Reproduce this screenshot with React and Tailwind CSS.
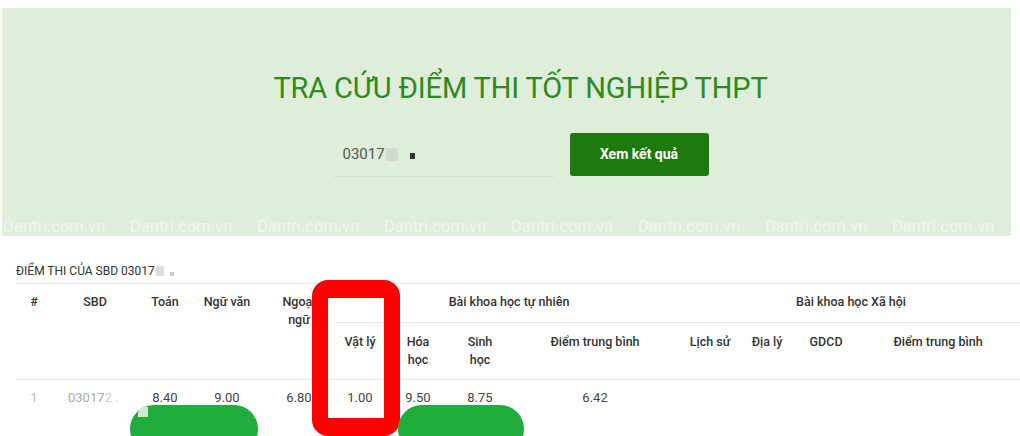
import React from "react";

const F = { fontFamily: "Roboto, 'Noto Sans', sans-serif" };

function Watermarks() {
  const items = Array.from({ length: 8 });
  return (
    <div className="flex gap-[22px] pl-[1px] whitespace-nowrap text-[16.5px] leading-[19px] text-white/55">
      {items.map((_, i) => (
        <span key={i} className="w-[105px] shrink-0">Dantri.com.vn</span>
      ))}
    </div>
  );
}

export default function App() {
  const th = "font-medium text-[12.5px] leading-[18px] text-[#333] text-center align-top";
  return (
    <div style={F} className="w-[1020px] h-[436px] bg-white overflow-hidden relative">
      <div className="pt-[8px] pl-[2px] pr-[9px]">
        <div className="bg-[#dfeddb] h-[228px] flex flex-col items-center">
          <h1 className="mt-[62px] pl-[28px] text-[29px] leading-[36px] text-[#2e8a1c] tracking-[-0.15px] font-normal">
            TRA CỨU ĐIỂM THI TỐT NGHIỆP THPT
          </h1>
          <div className="mt-[27px] flex items-start gap-[15px] pl-[28px]">
            <div className="w-[222px] h-[44px] border-b border-[#d3e2cf] flex items-center pl-[10px] text-[15px] text-[#555]">
              <span>03017</span>
              <span className="ml-[1px] w-[12px] h-[13px] bg-[#c9d3c7] opacity-70" />
              <span className="ml-[12px] w-[5px] h-[6px] bg-[#333] mt-[3px]" />
            </div>
            <button className="w-[139px] h-[43px] rounded-[3px] bg-[#1e7a0c] text-white text-[14px] font-bold">
              Xem kết quả
            </button>
          </div>
          <div className="mt-auto w-full overflow-hidden">
            <Watermarks />
          </div>
        </div>
      </div>

      <div className="pl-[16px] mt-[28px]">
        <div className="text-[12px] leading-[14px] text-[#333] flex items-center">
          ĐIỂM THI CỦA SBD 03017
          <span className="w-[8px] h-[10px] bg-[#ddd] ml-[1px]" />
          <span className="w-[4px] h-[4px] bg-[#ccc] ml-[6px] mt-[6px]" />
        </div>
        <table className="mt-[5px] border-collapse table-fixed w-[1004px] border-t border-[#e6e6e6]">
          <colgroup>
            <col className="w-[36px]" />
            <col className="w-[86px]" />
            <col className="w-[54px]" />
            <col className="w-[70px]" />
            <col className="w-[74px]" />
            <col className="w-[48px]" />
            <col className="w-[68px]" />
            <col className="w-[56px]" />
            <col className="w-[174px]" />
            <col className="w-[56px]" />
            <col className="w-[58px]" />
            <col className="w-[60px]" />
            <col className="w-[164px]" />
          </colgroup>
          <thead>
            <tr>
              <th rowSpan={2} className={`${th} pt-[9px]`}>#</th>
              <th rowSpan={2} className={`${th} pt-[9px]`}>SBD</th>
              <th rowSpan={2} className={`${th} pt-[9px]`}>Toán</th>
              <th rowSpan={2} className={`${th} pt-[9px]`}>Ngữ văn</th>
              <th rowSpan={2} className={`${th} pt-[9px]`}>Ngoại<br />ngữ</th>
              <th colSpan={4} className={`${th} pt-[9px] pb-[11px] border-b border-[#e6e6e6]`}>Bài khoa học tự nhiên</th>
              <th colSpan={4} className={`${th} pt-[9px] pb-[11px] border-b border-[#e6e6e6]`}>Bài khoa học Xã hội</th>
            </tr>
            <tr className="border-b border-[#e6e6e6]">
              <th className={`${th} pt-[10px] pb-[10px] h-[56px]`}>Vật lý</th>
              <th className={`${th} pt-[10px] pb-[10px]`}>Hóa<br />học</th>
              <th className={`${th} pt-[10px] pb-[10px]`}>Sinh<br />học</th>
              <th className={`${th} pt-[10px] pb-[10px]`}>Điểm trung bình</th>
              <th className={`${th} pt-[10px] pb-[10px]`}>Lịch sử</th>
              <th className={`${th} pt-[10px] pb-[10px]`}>Địa lý</th>
              <th className={`${th} pt-[10px] pb-[10px]`}>GDCD</th>
              <th className={`${th} pt-[10px] pb-[10px]`}>Điểm trung bình</th>
            </tr>
          </thead>
          <tbody>
            <tr className="text-[13px] leading-[18px] text-[#444] text-center">
              <td className="pt-[9px] text-[#bbb]">1</td>
              <td className="pt-[9px] text-[#aaa] text-left pl-[16px]">03017<span className="text-[#ccc]">2 .</span></td>
              <td className="pt-[9px]">8.40</td>
              <td className="pt-[9px]">9.00</td>
              <td className="pt-[9px]">6.80</td>
              <td className="pt-[9px]">1.00</td>
              <td className="pt-[9px]">9.50</td>
              <td className="pt-[9px]">8.75</td>
              <td className="pt-[9px]">6.42</td>
              <td className="pt-[9px]"></td>
              <td className="pt-[9px]"></td>
              <td className="pt-[9px]"></td>
              <td className="pt-[9px]"></td>
            </tr>
          </tbody>
        </table>
      </div>

      {/* annotation overlays */}
      <div className="absolute left-[312px] top-[280px] w-[88px] h-[156px] border-[16px] border-t-[18px] border-b-[18px] border-[#ff0000] rounded-[16px]" />
      <div className="absolute left-[130px] top-[405px] w-[128px] h-[48px] rounded-[24px] bg-[#20ad3e]">
        <div className="absolute left-[8px] top-[2px] w-[10px] h-[10px] bg-[#cfe9d2] rounded-tl-[6px]" />
      </div>
      <div className="absolute left-[398px] top-[405px] w-[126px] h-[48px] rounded-[24px] bg-[#20ad3e]" />
    </div>
  );
}
